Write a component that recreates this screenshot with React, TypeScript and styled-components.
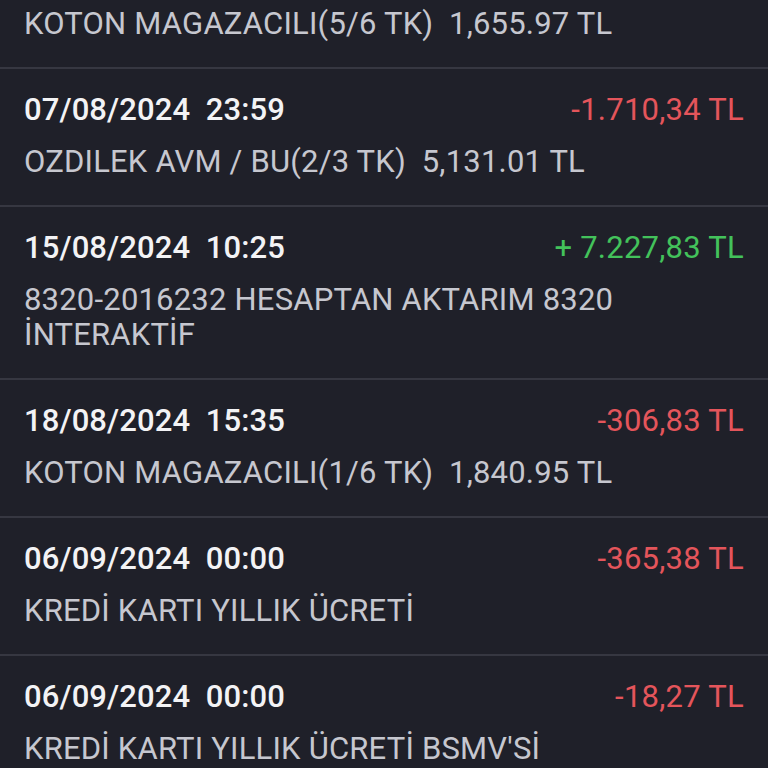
import React from 'react'
import styled, { createGlobalStyle } from 'styled-components'

const GlobalStyle = createGlobalStyle`
  html, body {
    margin: 0;
    padding: 0;
    background: #1f2029;
  }
  body {
    font-family: Roboto, "Noto Sans", sans-serif;
    -webkit-font-smoothing: antialiased;
  }
`

const List = styled.div`
  width: 768px;
  height: 768px;
  overflow: hidden;
  background: #1f2029;
`

const Row = styled.div<{ $partial?: boolean }>`
  padding: ${({ $partial }) => ($partial ? '6px' : '24px')} 24px 26px 24px;
  border-bottom: 2px solid #363741;
`

const Head = styled.div`
  display: flex;
  justify-content: space-between;
  align-items: center;
  margin-bottom: 17px;
`

const DateText = styled.span`
  font-size: 31px;
  line-height: 34px;
  font-weight: 500;
  letter-spacing: 0.1px;
  color: #f3f3f5;
  white-space: pre;
`

const Amount = styled.span<{ $positive?: boolean }>`
  font-size: 31px;
  line-height: 34px;
  letter-spacing: 0.25px;
  color: ${({ $positive }) => ($positive ? '#43c25b' : '#e4555b')};
  white-space: pre;
`

const Desc = styled.div`
  font-size: 31px;
  line-height: 35px;
  letter-spacing: 0.2px;
  color: #c6c7cf;
  white-space: pre-wrap;
`

type Tx = {
  date?: string
  amount?: string
  positive?: boolean
  desc: string
}

const items: Tx[] = [
  { desc: 'KOTON MAGAZACILI(5/6 TK)  1,655.97 TL' },
  { date: '07/08/2024  23:59', amount: '-1.710,34 TL', desc: 'OZDILEK AVM / BU(2/3 TK)  5,131.01 TL' },
  { date: '15/08/2024  10:25', amount: '+ 7.227,83 TL', positive: true, desc: '8320-2016232 HESAPTAN AKTARIM 8320\nİNTERAKTİF' },
  { date: '18/08/2024  15:35', amount: '-306,83 TL', desc: 'KOTON MAGAZACILI(1/6 TK)  1,840.95 TL' },
  { date: '06/09/2024  00:00', amount: '-365,38 TL', desc: 'KREDİ KARTI YILLIK ÜCRETİ' },
  { date: '06/09/2024  00:00', amount: '-18,27 TL', desc: "KREDİ KARTI YILLIK ÜCRETİ BSMV'Sİ" },
]

export default function App() {
  return (
    <>
      <GlobalStyle />
      <List>
        {items.map((tx, i) => (
          <Row key={i} $partial={!tx.date}>
            {tx.date && (
              <Head>
                <DateText>{tx.date}</DateText>
                <Amount $positive={tx.positive}>{tx.amount}</Amount>
              </Head>
            )}
            <Desc>{tx.desc}</Desc>
          </Row>
        ))}
      </List>
    </>
  )
}
